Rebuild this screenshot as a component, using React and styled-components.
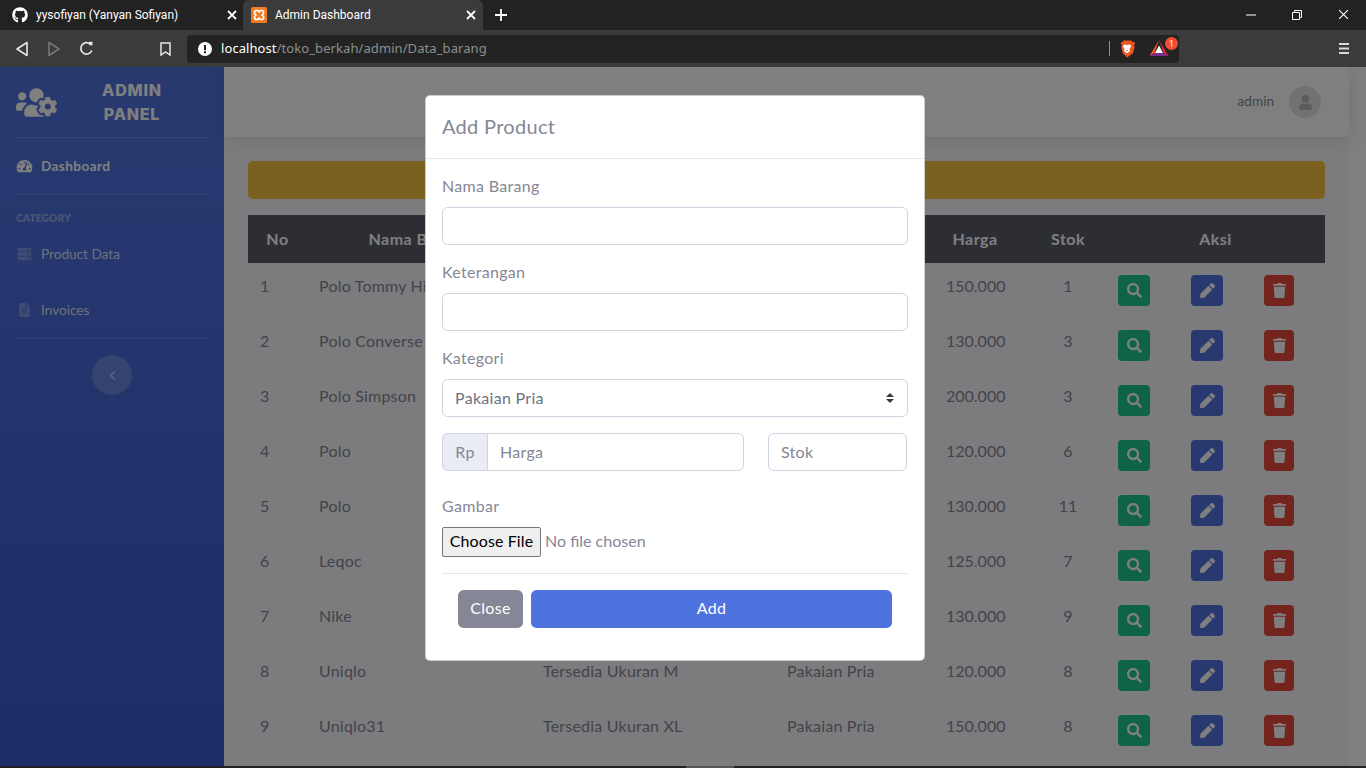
import React from "react";
import styled, { createGlobalStyle } from "styled-components";
import {
  FaGithub,
  FaUsersCog,
  FaTachometerAlt,
  FaServer,
  FaFileAlt,
  FaChevronLeft,
  FaUser,
  FaSearch,
  FaPen,
  FaTrash,
} from "react-icons/fa";

const UI_FONT = `"Lato", "Noto Sans", sans-serif`;
const CHROME_FONT = `"Noto Sans", "Open Sans", sans-serif`;

const GlobalStyle = createGlobalStyle`
  html, body {
    margin: 0;
    padding: 0;
    overflow: hidden;
  }
  * {
    box-sizing: border-box;
  }
  body {
    font-family: ${UI_FONT};
    font-size: 16px;
    color: #858796;
  }
`;

const rows = [
  ["Polo Tommy Hilfiger", "Tersedia Ukuran L", "150.000", 1],
  ["Polo Converse", "Tersedia Ukuran M", "130.000", 3],
  ["Polo Simpson", "Tersedia Ukuran L", "200.000", 3],
  ["Polo", "Tersedia Ukuran M", "120.000", 6],
  ["Polo", "Tersedia Ukuran L", "130.000", 11],
  ["Leqoc", "Tersedia Ukuran M", "125.000", 7],
  ["Nike", "Tersedia Ukuran L", "130.000", 9],
  ["Uniqlo", "Tersedia Ukuran M", "120.000", 8],
  ["Uniqlo31", "Tersedia Ukuran XL", "150.000", 8],
];

const columnWidths = [59, 224, 244, 159, 96, 76, 73, 73, 73];

const Page = styled.div`
  width: 1366px;
  height: 768px;
  display: flex;
  flex-direction: column;
  overflow: hidden;
  background: #222;
`;

/* browser chrome */
const TabBar = styled.div`
  height: 30px;
  flex: none;
  display: flex;
  background: #222222;
  color: #fff;
  font-family: "Roboto", ${CHROME_FONT};
  font-size: 12px;
`;

const Tab = styled.div`
  width: ${(p) => (p.$active ? 240 : 243)}px;
  height: 30px;
  display: flex;
  align-items: center;
  padding: 0 ${(p) => (p.$active ? "4px" : "3px")} 0 ${(p) => (p.$active ? "8px" : "12px")};
  gap: 8px;
  background: ${(p) => (p.$active ? "#3b3b3b" : "transparent")};
  border-radius: 6px 6px 0 0;
`;

const TabTitle = styled.span`
  flex: 1;
  white-space: nowrap;
  overflow: hidden;
`;

const TabClose = styled.div`
  width: 16px;
  height: 16px;
  display: flex;
  align-items: center;
  justify-content: center;
`;

const NewTab = styled.div`
  width: 36px;
  display: flex;
  align-items: center;
  justify-content: center;
`;

const WindowControls = styled.div`
  margin-left: auto;
  display: flex;
`;

const WindowButton = styled.div`
  width: 46px;
  height: 29px;
  display: flex;
  align-items: center;
  justify-content: center;
`;

const Toolbar = styled.div`
  height: 37px;
  flex: none;
  display: flex;
  align-items: center;
  background: #3b3b3b;
  font-family: ${CHROME_FONT};
`;

const ToolButton = styled.div`
  width: 32px;
  height: 28px;
  display: flex;
  align-items: center;
  justify-content: center;
`;

const NavButtons = styled.div`
  display: flex;
  padding-left: 6px;
  width: 149px;
`;

const UrlBar = styled.div`
  width: 992px;
  height: 28px;
  margin-left: 6px;
  display: flex;
  align-items: center;
  background: #232323;
  border-radius: 4px;
  padding-left: 11px;
  font-size: 13px;
`;

const UrlText = styled.span`
  margin-left: 9px;
  padding-bottom: 2px;
  color: #8f8f8f;
  letter-spacing: 0.08px;
  b {
    color: #fff;
    font-weight: 400;
  }
`;

const UrlActions = styled.div`
  margin-left: auto;
  display: flex;
  align-items: center;
  height: 100%;
`;

const UrlDivider = styled.div`
  width: 1px;
  height: 15px;
  background: #8d8d8d;
  margin-right: 9px;
`;

const BatWrap = styled.div`
  position: relative;
  width: 20px;
  height: 18px;
  margin: 0 10px 0 14px;
`;

const BatBadge = styled.span`
  position: absolute;
  top: -3px;
  right: -9px;
  width: 13px;
  height: 13px;
  border-radius: 50%;
  background: #f24e2f;
  color: #fff;
  font-size: 8px;
  line-height: 13px;
  text-align: center;
`;

const MenuSlot = styled.div`
  margin-left: 149px;
  width: 32px;
  display: flex;
  justify-content: center;
`;

/* page */
const Body = styled.div`
  position: relative;
  flex: 1;
  display: flex;
  overflow: hidden;
  background: #fff;
`;

const Sidebar = styled.aside`
  width: 224px;
  flex: none;
  background-image: linear-gradient(180deg, #4e73df 10%, #3a5bd0 100%);
  color: #fff;
`;

const Brand = styled.div`
  height: 70px;
  display: flex;
  align-items: center;
  padding: 0 16px;
`;

const BrandText = styled.div`
  width: 80px;
  margin-left: 35px;
  text-align: center;
  font-family: "Inter", sans-serif;
  font-weight: 800;
  font-size: 16px;
  line-height: 24px;
  letter-spacing: 0.8px;
`;

const SideDivider = styled.hr`
  border: 0;
  height: 1px;
  margin: 0 16px ${(p) => p.$gap || 0}px;
  background: rgba(255, 255, 255, 0.15);
`;

const SideHeading = styled.div`
  margin-top: 15px;
  padding: 0 16px;
  font-size: 10.4px;
  line-height: 16px;
  font-weight: 800;
  color: rgba(255, 255, 255, 0.4);
`;

const SideItem = styled.div`
  height: 56px;
  display: flex;
  align-items: center;
  padding: 0 16px;
  font-size: 13.6px;
  font-weight: ${(p) => (p.$active ? 700 : 400)};
  letter-spacing: ${(p) => (p.$active ? "0.4px" : "0")};
  color: ${(p) => (p.$active ? "#fff" : "rgba(255, 255, 255, 0.8)")};
  svg {
    width: 17px;
    height: 14px;
    margin-right: 8px;
    color: ${(p) => (p.$active ? "#fff" : "rgba(255, 255, 255, 0.3)")};
  }
`;

const SideToggle = styled.div`
  width: 40px;
  height: 40px;
  margin: 0 auto;
  border-radius: 50%;
  background: rgba(255, 255, 255, 0.2);
  color: rgba(255, 255, 255, 0.5);
  display: flex;
  align-items: center;
  justify-content: center;
`;

const Main = styled.main`
  flex: 1;
  min-width: 0;
  padding-right: 17px;
  background: #fff;
`;

const Topbar = styled.header`
  height: 70px;
  display: flex;
  align-items: center;
  justify-content: flex-end;
  gap: 15px;
  padding-right: 28px;
  background: #fff;
  box-shadow: 0 2px 20px rgba(58, 59, 69, 0.15);
  font-size: 13.6px;
  color: #858796;
  position: relative;
`;

const UserName = styled.span`
  padding-bottom: 2px;
`;

const Avatar = styled.div`
  width: 32px;
  height: 32px;
  border-radius: 50%;
  background: #e4e4e4;
  color: #b8b8b8;
  display: flex;
  align-items: center;
  justify-content: center;
`;

const Content = styled.div`
  height: 100%;
  padding: 24px 24px 0;
  background: #f8f9fc;
`;

const AlertBar = styled.div`
  height: 38px;
  margin-bottom: 16px;
  background: #f6c23e;
  border-radius: 5px;
`;

const Table = styled.table`
  width: 1077px;
  table-layout: fixed;
  border-collapse: collapse;
`;

const HeadRow = styled.tr`
  height: 48px;
  background: #5a5c69;
  color: #fff;
`;

const Th = styled.th`
  padding: 0 ${(p) => (p.$shift ? "26px" : "12px")} 2px 12px;
  font-weight: 700;
  letter-spacing: 0.5px;
  text-align: center;
`;

const Td = styled.td`
  padding: 11px 12px 13px;
  height: 55px;
  line-height: 24px;
  vertical-align: top;
  white-space: nowrap;
  overflow: hidden;
  text-align: ${(p) => (p.$center ? "center" : "left")};
  letter-spacing: ${(p) => (p.$text ? "0.2px" : "0")};
  color: #858796;
`;

const ActionCell = styled.td`
  padding: 12px;
  height: 55px;
  vertical-align: top;
`;

const ActionButton = styled.div`
  width: ${(p) => (p.$narrow ? 30 : 32)}px;
  height: 31px;
  border-radius: 4px;
  background: ${(p) => p.$color};
  color: #fff;
  display: flex;
  align-items: center;
  justify-content: center;
  font-size: 15px;
`;

/* modal */
const Backdrop = styled.div`
  position: absolute;
  inset: 0;
  padding: 28px 16px 0 0;
  display: flex;
  justify-content: center;
  align-items: flex-start;
  background: rgba(0, 0, 0, 0.5);
`;

const Modal = styled.div`
  width: 500px;
  background: #fff;
  border: 1px solid rgba(0, 0, 0, 0.2);
  border-radius: 5px;
`;

const ModalHeader = styled.div`
  height: 63px;
  display: flex;
  align-items: center;
  padding: 0 16px 3px;
  border-bottom: 1px solid #e3e6f0;
  font-size: 20px;
  letter-spacing: 0.3px;
  color: #858796;
`;

const ModalBody = styled.div`
  padding: 16px 16px 32px;
`;

const Field = styled.div`
  margin-bottom: ${(p) => p.$gap ?? 16}px;
`;

const Label = styled.label`
  display: block;
  margin-bottom: 10px;
  line-height: 22px;
  letter-spacing: 0.3px;
  color: #858796;
`;

const controlStyles = `
  height: 38px;
  padding: 0 12px 2px;
  border: 1px solid #d1d3e2;
  border-radius: 5.6px;
  background: #fff;
  font-family: ${UI_FONT};
  font-size: 16px;
  letter-spacing: 0.3px;
  color: #6e707e;
  outline: none;
  &::placeholder {
    color: #858796;
    opacity: 1;
  }
`;

const Input = styled.input`
  ${controlStyles}
  display: block;
  width: 100%;
`;

const Select = styled.select`
  ${controlStyles}
  display: block;
  width: 100%;
  appearance: none;
  background-image: url("data:image/svg+xml,%3Csvg xmlns='http://www.w3.org/2000/svg' width='10' height='12' viewBox='0 0 10 12'%3E%3Cpath fill='%23343a40' d='M5 1 1 5h8zM5 11 1 7h8z'/%3E%3C/svg%3E");
  background-repeat: no-repeat;
  background-position: right 12px center;
`;

const PriceRow = styled.div`
  display: flex;
  margin-bottom: 24px;
`;

const PriceGroup = styled.div`
  width: 302px;
  display: flex;
`;

const Addon = styled.span`
  width: 46px;
  height: 38px;
  flex: none;
  display: flex;
  align-items: center;
  justify-content: center;
  padding-bottom: 2px;
  background: #eaecf4;
  border: 1px solid #d1d3e2;
  border-radius: 5.6px 0 0 5.6px;
  letter-spacing: 0.3px;
`;

const PriceInput = styled(Input)`
  margin-left: -1px;
  border-radius: 0 5.6px 5.6px 0;
`;

const StockInput = styled(Input)`
  width: 139px;
  margin-left: 24px;
`;

const FileInput = styled.input`
  display: block;
  width: 100%;
  height: 30px;
  font-family: ${UI_FONT};
  font-size: 16px;
  color: #858796;
  &::file-selector-button {
    height: 30px;
    width: 99px;
    margin-right: 4px;
    padding: 0 0 3px;
    font-family: ${UI_FONT};
    font-size: 16px;
    letter-spacing: 0.1px;
    color: #000;
    background: #efefef;
    border: 1px solid #767676;
    border-radius: 2px;
  }
`;

const Footer = styled.div`
  margin-top: 16px;
  padding: 16px 16px 0;
  border-top: 1px solid #e3e6f0;
  display: flex;
  gap: 8px;
`;

const Button = styled.button`
  height: 38px;
  flex: ${(p) => (p.$grow ? 1 : "none")};
  width: ${(p) => (p.$grow ? "auto" : "65px")};
  padding: 0 0 3px;
  border: 0;
  border-radius: 5.6px;
  background: ${(p) => (p.$grow ? "#4e73df" : "#858796")};
  color: #fff;
  font-family: ${UI_FONT};
  font-size: 16px;
  letter-spacing: 0.3px;
`;

const BottomStrip = styled.div`
  height: 2px;
  flex: none;
  display: flex;
  justify-content: flex-start;
  padding-left: 686px;
  background: #222;
  &::after {
    content: "";
    width: 48px;
    background: #555;
  }
`;

const CloseIcon = ({ size = 10, stroke = 1.8 }) => (
  <svg width={size} height={size} viewBox="0 0 10 10" fill="none" stroke="#fff" strokeWidth={stroke}>
    <path d="M1 1l8 8M9 1l-8 8" />
  </svg>
);

const XamppIcon = () => (
  <svg width="16" height="16" viewBox="0 0 16 16">
    <rect width="16" height="16" rx="1.5" fill="#f27b21" />
    <path
      d="M4.5 3.5h2.2L8 5l1.3-1.5h2.2l1 1.2v1.8L11 8l1.5 1.5v1.8l-1 1.2H9.3L8 11l-1.3 1.5H4.5l-1-1.2V9.500L5 8 3.500 6.500V4.700z"
      fill="none"
      stroke="#fff"
      strokeWidth="1.7"
      strokeLinejoin="round"
    />
  </svg>
);

const BraveIcon = () => (
  <svg width="16" height="18" viewBox="0 0 16 18">
    <path d="M4 0.500h8l1.500 1.500 1.700-.2.800 2-1 1.500.6 2-1.600 6L8 17.500l-4.200-4.200-1.600-6 .6-2-1-1.500.8-2L4.200 2z" fill="#f0551f" />
    <path d="M4.500 5l2-.5L8 5.200l1.500-.7 2 .5.800 1.200L10.500 9l.6 2L8 13.500 4.900 11l.6-2-1.800-2.800z" fill="#fff" />
    <path d="M6.800 10h2.400L8 11.200z" fill="#f0551f" />
  </svg>
);

const BatIcon = () => (
  <svg width="20" height="18" viewBox="0 0 20 18">
    <path d="M10 0 19.500 16 14.500 13z" fill="#e0243e" />
    <path d="M10 0 0.500 16l5-3z" fill="#f5561f" />
    <path d="M0.500 16h19l-5-3h-9z" fill="#7b2a8f" />
    <path d="M10 5.500 6 13h8z" fill="#fff" />
  </svg>
);

function App() {
  return (
    <Page>
      <GlobalStyle />
      <TabBar>
        <Tab>
          <FaGithub size={16} />
          <TabTitle>yysofiyan (Yanyan Sofiyan)</TabTitle>
          <TabClose>
            <CloseIcon />
          </TabClose>
        </Tab>
        <Tab $active>
          <XamppIcon />
          <TabTitle>Admin Dashboard</TabTitle>
          <TabClose>
            <CloseIcon />
          </TabClose>
        </Tab>
        <NewTab>
          <svg width="12" height="12" viewBox="0 0 12 12" stroke="#fff" strokeWidth="1.8">
            <path d="M6 0v12M0 6h12" />
          </svg>
        </NewTab>
        <WindowControls>
          <WindowButton>
            <svg width="10" height="10" viewBox="0 0 10 10" stroke="#fff" strokeWidth="1">
              <path d="M0 5h10" />
            </svg>
          </WindowButton>
          <WindowButton>
            <svg width="10" height="10" viewBox="0 0 10 10" fill="none" stroke="#fff" strokeWidth="1">
              <path d="M.5 2.500h7v7h-7zM2.500 2.500v-2h7v7h-2" />
            </svg>
          </WindowButton>
          <WindowButton>
            <CloseIcon size={11} stroke={1} />
          </WindowButton>
        </WindowControls>
      </TabBar>

      <Toolbar>
        <NavButtons>
          <ToolButton>
            <svg width="12" height="16" viewBox="0 0 12 16" fill="none" stroke="#e6e6e6" strokeWidth="1.6" strokeLinejoin="round">
              <path d="M11 1.500v13L1 8z" />
            </svg>
          </ToolButton>
          <ToolButton>
            <svg width="12" height="16" viewBox="0 0 12 16" fill="none" stroke="#777" strokeWidth="1.6" strokeLinejoin="round">
              <path d="M1 1.500v13L11 8z" />
            </svg>
          </ToolButton>
          <ToolButton>
            <svg width="15" height="15" viewBox="0 0 15 15" fill="none" stroke="#e6e6e6" strokeWidth="1.7">
              <path d="M12.800 9.500A5.700 5.700 0 1 1 11.200 3" />
              <path d="M10 .8h3.500v3.500H10z" fill="#e6e6e6" stroke="none" />
            </svg>
          </ToolButton>
        </NavButtons>
        <ToolButton>
          <svg width="11" height="14" viewBox="0 0 11 14" fill="none" stroke="#e6e6e6" strokeWidth="1.5">
            <path d="M1 1h9v12L5.500 10 1 13z" />
          </svg>
        </ToolButton>
        <UrlBar>
          <svg width="14" height="14" viewBox="0 0 14 14">
            <circle cx="7" cy="7" r="7" fill="#fff" />
            <path d="M6 3h2v5.200H6zM6 9.300h2v2H6z" fill="#232323" />
          </svg>
          <UrlText>
            <b>localhost</b>/toko_berkah/admin/Data_barang
          </UrlText>
          <UrlActions>
            <UrlDivider />
            <BraveIcon />
            <BatWrap>
              <BatIcon />
              <BatBadge>1</BatBadge>
            </BatWrap>
          </UrlActions>
        </UrlBar>
        <MenuSlot>
          <svg width="10" height="11" viewBox="0 0 10 11" fill="#d8d8d8">
            <path d="M0 0h10v2H0zM0 4.500h10v2H0zM0 9h10v2H0z" />
          </svg>
        </MenuSlot>
      </Toolbar>

      <Body>
        <Sidebar>
          <Brand>
            <FaUsersCog size={41} />
            <BrandText>ADMIN PANEL</BrandText>
          </Brand>
          <SideDivider />
          <SideItem $active>
            <FaTachometerAlt />
            Dashboard
          </SideItem>
          <SideDivider />
          <SideHeading>CATEGORY</SideHeading>
          <SideItem>
            <FaServer />
            Product Data
          </SideItem>
          <SideItem>
            <FaFileAlt />
            Invoices
          </SideItem>
          <SideDivider $gap={16} />
          <SideToggle>
            <FaChevronLeft size={11} />
          </SideToggle>
        </Sidebar>

        <Main>
          <Topbar>
            <UserName>admin</UserName>
            <Avatar>
              <FaUser size={15} />
            </Avatar>
          </Topbar>
          <Content>
            <AlertBar />
            <Table>
              <colgroup>
                {columnWidths.map((w, i) => (
                  <col key={i} width={w} />
                ))}
              </colgroup>
              <thead>
                <HeadRow>
                  <Th>No</Th>
                  <Th>Nama Barang</Th>
                  <Th>Keterangan</Th>
                  <Th>Kategori</Th>
                  <Th $shift>Harga</Th>
                  <Th>Stok</Th>
                  <Th colSpan={3}>Aksi</Th>
                </HeadRow>
              </thead>
              <tbody>
                {rows.map((row, i) => (
                  <tr key={i}>
                    <Td>{i + 1}</Td>
                    <Td $text>{row[0]}</Td>
                    <Td $text>{row[1]}</Td>
                    <Td $text>Pakaian Pria</Td>
                    <Td>{row[2]}</Td>
                    <Td $center>{row[3]}</Td>
                    <ActionCell>
                      <ActionButton $color="#1cc88a">
                        <FaSearch />
                      </ActionButton>
                    </ActionCell>
                    <ActionCell>
                      <ActionButton $color="#4e73df">
                        <FaPen />
                      </ActionButton>
                    </ActionCell>
                    <ActionCell>
                      <ActionButton $color="#e74a3b" $narrow>
                        <FaTrash />
                      </ActionButton>
                    </ActionCell>
                  </tr>
                ))}
              </tbody>
            </Table>
          </Content>
        </Main>

        <Backdrop>
          <Modal>
            <ModalHeader>Add Product</ModalHeader>
            <ModalBody>
              <Field>
                <Label>Nama Barang</Label>
                <Input type="text" />
              </Field>
              <Field>
                <Label>Keterangan</Label>
                <Input type="text" />
              </Field>
              <Field>
                <Label>Kategori</Label>
                <Select defaultValue="Pakaian Pria">
                  <option>Pakaian Pria</option>
                  <option>Pakaian Wanita</option>
                </Select>
              </Field>
              <PriceRow>
                <PriceGroup>
                  <Addon>Rp</Addon>
                  <PriceInput type="text" placeholder="Harga" />
                </PriceGroup>
                <StockInput type="text" placeholder="Stok" />
              </PriceRow>
              <Field $gap={0}>
                <Label>Gambar</Label>
                <FileInput type="file" />
              </Field>
              <Footer>
                <Button type="button">Close</Button>
                <Button type="button" $grow>
                  Add
                </Button>
              </Footer>
            </ModalBody>
          </Modal>
        </Backdrop>
      </Body>
      <BottomStrip />
    </Page>
  );
}

export default App;
